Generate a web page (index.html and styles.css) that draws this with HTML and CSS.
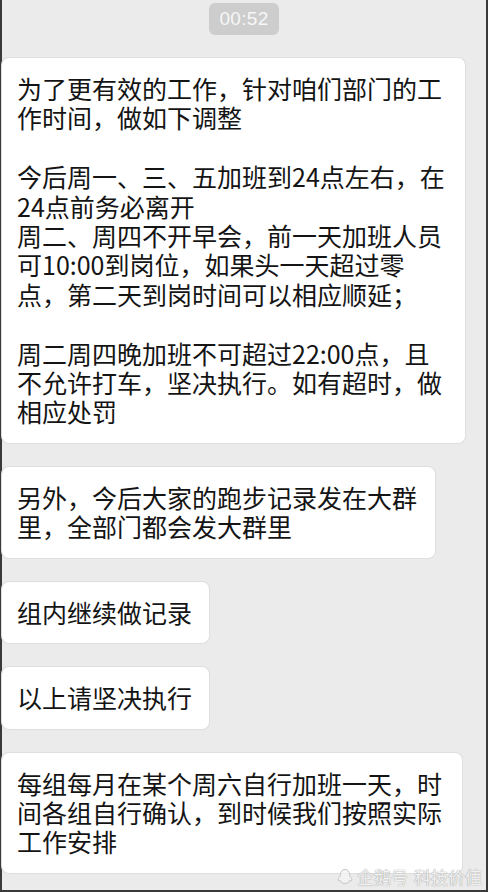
FILE: index.html
```html
<!DOCTYPE html>
<html lang="zh-CN">
<head>
<meta charset="utf-8">
<title>聊天记录</title>
<link rel="stylesheet" href="styles.css">
</head>
<body>
<div class="frame">
  <div class="time-row"><span class="time">00:52</span></div>
  <div class="chat">
    <div class="bubble bubble-wide">为了更有效的工作，针对咱们部门的工作时间，做如下调整

今后周一、三、五加班到24点左右，在24点前务必离开
周二、周四不开早会，前一天加班人员可10:00到岗位，如果头一天超过零点，第二天到岗时间可以相应顺延；

周二周四晚加班不可超过22:00点，且不允许打车，坚决执行。如有超时，做相应处罚</div>
    <div class="bubble bubble-16">另外，今后大家的跑步记录发在大群里，全部门都会发大群里</div>
    <div class="bubble">组内继续做记录</div>
    <div class="bubble">以上请坚决执行</div>
    <div class="bubble bubble-17">每组每月在某个周六自行加班一天，时间各组自行确认，到时候我们按照实际工作安排</div>
  </div>
  <div class="watermark">
    <svg class="wm-icon" width="16" height="18" viewBox="0 0 16 18"><path d="M8 1.5c-3 0-4.6 2.4-4.6 5.2 0 1.2-.9 2.3-1.8 3.6-.9 1.4-.4 2.6.6 2.6.4 0 .8-.3 1-.6.5 1.8 2.3 3.2 4.8 3.2s4.3-1.4 4.8-3.2c.2.3.6.6 1 .6 1 0 1.5-1.2.6-2.6-.9-1.3-1.8-2.4-1.8-3.6C12.6 3.9 11 1.5 8 1.5z" fill="#f4f4f4" stroke="#bdbdbd" stroke-width="1"/></svg>
    <span class="wm-text">企鹅号</span><span class="wm-text wm-gap">科技价值</span>
  </div>
</div>
</body>
</html>
```

FILE: styles.css
```css
* { box-sizing: border-box; }

html, body {
  margin: 0;
  padding: 0;
}

body {
  width: 488px;
  height: 892px;
  overflow: hidden;
  background: #ebebeb;
}

.frame {
  position: relative;
  width: 488px;
  height: 892px;
  background: #ebebeb;
  border-left: 2px solid #3a3a3a;
  border-right: 2px solid #3a3a3a;
  border-bottom: 2px solid #3a3a3a;
  font-family: "Noto Sans CJK SC", "Noto Sans", sans-serif;
}

.time-row {
  display: flex;
  justify-content: center;
  padding-top: 3px;
}

.time {
  display: block;
  width: 70px;
  height: 32px;
  line-height: 32px;
  text-align: center;
  background: #cdcdcd;
  color: #f7f7f7;
  border-radius: 6px;
  font-family: "Liberation Sans", Arial, sans-serif;
  font-size: 19px;
  letter-spacing: 0.3px;
}

.chat {
  display: flex;
  flex-direction: column;
  align-items: flex-start;
  gap: 24px;
  padding-top: 23px;
}

.bubble {
  max-width: 464px;
  background: #ffffff;
  border-radius: 7px;
  box-shadow: 0 0 0 1px #dedede;
  padding: 16px 17px 16px 15px;
  font-size: 25px;
  line-height: 29.4px;
  color: #141414;
  line-break: strict;
  white-space: pre-line;
}

.bubble-wide { width: 463px; }
.bubble-16 { width: 433px; }
.bubble-17 { width: 460px; }

.watermark {
  position: absolute;
  right: 4px;
  bottom: 3px;
  display: flex;
  align-items: center;
  gap: 4px;
  font-family: "Noto Sans CJK SC", sans-serif;
  font-size: 17px;
  line-height: 20px;
  color: #f2f2f2;
  opacity: 0.85;
}

.wm-text {
  color: #f3f3f3;
  text-shadow: 0 0 1px #9a9a9a, 0 0 1px #9a9a9a;
}

.wm-gap {
  margin-left: 2px;
}

.wm-icon {
  display: block;
}
```
